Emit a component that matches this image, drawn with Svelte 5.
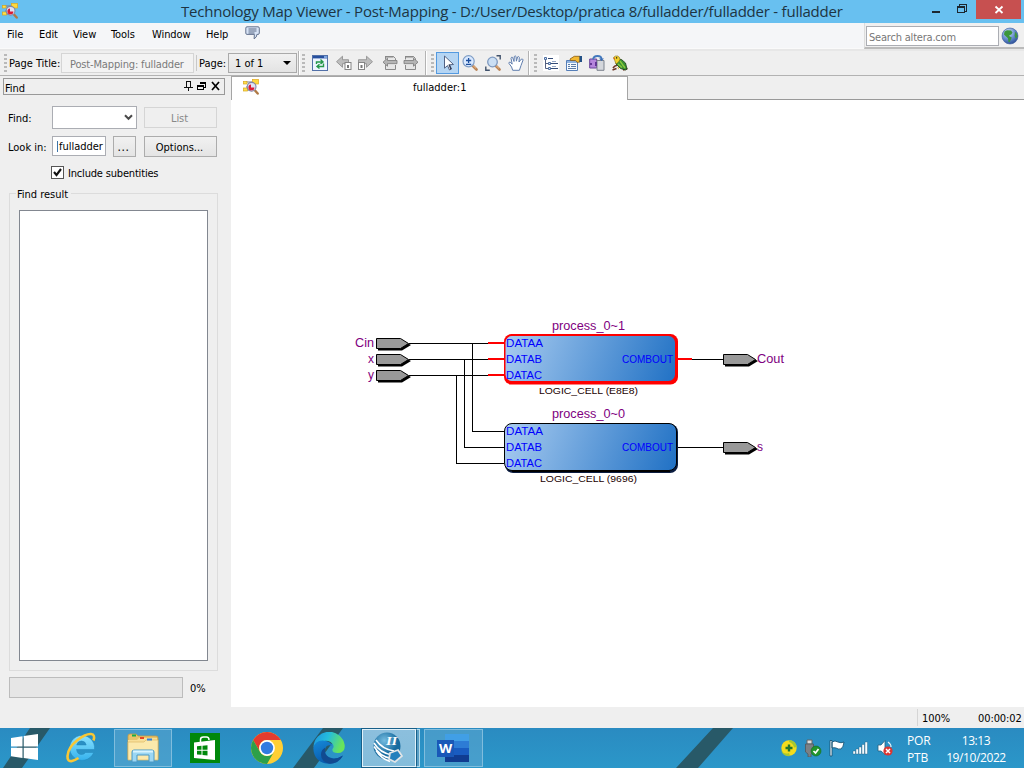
<script lang="ts">
  const menus = [
    { t: 'File', w: 32 }, { t: 'Edit', w: 34 }, { t: 'View', w: 38 },
    { t: 'Tools', w: 41 }, { t: 'Window', w: 54 }, { t: 'Help', w: 39 }
  ];
  const cells = [
    { y: 335, name: 'process_0~1', kind: 'LOGIC_CELL (E8E8)', sel: true },
    { y: 423, name: 'process_0~0', kind: 'LOGIC_CELL (9696)', sel: false }
  ];
  const ports = ['DATAA', 'DATAB', 'DATAC'];
  const pins = [
    { x: 376, y: 338, t: 'Cin', tx: 355, w: 19 },
    { x: 376, y: 354, t: 'x', tx: 368, w: 6 },
    { x: 376, y: 370, t: 'y', tx: 368, w: 6 },
    { x: 723, y: 354, t: 'Cout', tx: 757, w: 27 },
    { x: 723, y: 442, t: 's', tx: 757, w: 6 }
  ];
</script>

{#snippet mapIcon()}
  <svg class="i16" viewBox="0 0 16 16">
    <path d="M3 3h8M3 8h6M3 11h5" stroke="#777b96" fill="none" />
    <rect x="0.5" y="2.5" width="3.500" height="2.500" fill="#ffe04a" stroke="#d8a51e" stroke-width=".7" />
    <rect x="0.500" y="9" width="4" height="3" fill="#ffe04a" stroke="#d8a51e" stroke-width=".7" />
    <rect x="9.500" y="0.500" width="6" height="4.500" fill="#ffd93c" stroke="#e0a81c" stroke-width=".7" />
    <path d="M12 11.500l2.700 3" stroke="#b07a45" stroke-width="2.400" stroke-linecap="round" />
    <circle cx="8.600" cy="7.800" r="4.400" fill="#dfe2f4" stroke="#8287a6" stroke-width="1.100" />
    <path d="M8 5.400v3h3.400a3 3 0 1 1-3.400-3z" fill="#dc1a34" />
  </svg>
{/snippet}

{#snippet magnifier()}
  <path d="M10.500 10.500l4 4" stroke="#b98254" stroke-width="2.600" stroke-linecap="round" />
  <path d="M10.500 10l3.600 3.500" stroke="#eebd8b" stroke-width="1" />
{/snippet}

<div class="window">
  <header class="titlebar">
    <span class="app">{@render mapIcon()}</span>
    <h1>Technology Map Viewer - Post-Mapping - D:/User/Desktop/pratica 8/fulladder/fulladder - fulladder</h1>
    <svg class="winbtns" viewBox="0 0 44 20" shape-rendering="crispEdges">
      <path d="M4 11h8v2H4z" fill="#1c2730" />
      <path d="M31.500 6V4.500h7v7H37M29.500 6.500h7v6h-7z" fill="none" stroke="#1c2730" />
      <path d="M29 6h8v2h-8z" fill="#1c2730" />
    </svg>
    <div class="close"><svg viewBox="0 0 10 10"><path d="M1.500 1.500l7 6.500M8.500 1.500l-7 6.500" stroke="#fff" stroke-width="1.800" /></svg></div>
  </header>

  <nav class="menubar">
    {#each menus as m}<span style:width="{m.w}px">{m.t}</span>{/each}
    <svg class="chat" viewBox="0 0 15 14">
      <path d="M2 .8h11q1.300 0 1.300 1.300v5q0 1.300-1.300 1.300h-1.100q.2 2.700-2.800 4.500l.3-4.500H2Q.8 8.400.8 7.100v-5Q.8.8 2 .8z" fill="#d7e3f6" stroke="#64738e" />
      <path d="M3.500 3h8M3.500 5h8M3.500 7h6" stroke="#4e5d78" stroke-width=".9" />
    </svg>
    <div class="search">
      <div class="field">Search altera.com</div>
      <svg class="globe" viewBox="0 0 18 18">
        <defs><radialGradient id="glb" cx=".38" cy=".28" r=".8"><stop offset="0" stop-color="#d6e4f8" /><stop offset=".5" stop-color="#6b92d1" /><stop offset="1" stop-color="#23458f" /></radialGradient></defs>
        <circle cx="9" cy="9" r="8" fill="url(#glb)" stroke="#3a5c9d" stroke-width=".6" />
        <path d="M3.500 4.500L6 3.200l4 .3 1.500 2-1.200 2-2 .8.3 1.200 2.200 1-1 2.200-1.300 2.600-1-.4-.6-3.600L5 9.500 3 7.500z" fill="#3b973b" />
        <path d="M14 4.500l2 2.500.5 3-1.700 1.500-1.200-2.500z" fill="#419541" />
      </svg>
    </div>
  </nav>

  <div class="toolbar">
    <i class="grip"></i>
    <span class="ptitle">Page Title:</span>
    <span class="pagebox">Post-Mapping: fulladder</span>
    <i class="thin"></i>
    <span class="page">Page:</span>
    <span class="pagesel"><span>1 of 1</span><b></b></span>
    <i class="bar"></i>
    <i class="grip g2"></i>
    <div class="icons a">
      <svg class="i16" viewBox="0 0 16 16">
        <rect x=".5" y=".5" width="15" height="15" fill="#edf4ff" stroke="#5270a8" /><path d="M1 1h14v2.400H1z" fill="#264f9e" /><path d="M12 1h3v2h-3z" fill="#7da5e0" />
        <path d="M4.500 9V7h6M8.500 4.600l2.500 2.300-2.500 2.100M11.500 8.500v3h-6M7.500 9.300L5 11.500l2.500 2" fill="none" stroke="#26984a" stroke-width="1.400" />
      </svg>
      <svg class="i16" viewBox="0 0 16 16"><path d="M.5 6.700l6-5.500v3.500h6v4h-6v3.600z" fill="#bdbdbd" stroke="#8a8a8a" stroke-width=".8" /><rect x="9" y="7.500" width="6" height="7" fill="#fff" stroke="#858585" /><rect x="11" y="10" width="2" height="3" fill="#777" /></svg>
      <svg class="i16" viewBox="0 0 16 16"><path d="M15.500 6.700l-6-5.500v3.500h-8v4h8v3.600z" fill="#bdbdbd" stroke="#8a8a8a" stroke-width=".8" /><rect x="1.500" y="7.500" width="6" height="7" fill="#fff" stroke="#858585" /><rect x="3.500" y="10" width="2" height="3" fill="#777" /></svg>
      <svg class="i16" viewBox="0 0 16 16"><path d="M3.500 4.500v-3h8l2 2v1.500M3.500 10v4.500h10V10" fill="#e6e6e6" stroke="#8a8a8a" /><path d="M3 1h8.500v1.500H3z" fill="#888" /><path d="M1 7.200l4.500-4v2.300H15v3.200H5.500v2.500z" fill="#b5b5b5" stroke="#777" stroke-width=".8" /></svg>
      <svg class="i16" viewBox="0 0 16 16"><path d="M2.500 4.500v-3h8l2 2v1.500M2.500 10v4.500h10V10" fill="#e6e6e6" stroke="#8a8a8a" /><path d="M2 1h8.500v1.500H2z" fill="#888" /><path d="M15 7.200l-4.500-4v2.300H1v3.200h9.500v2.500z" fill="#b5b5b5" stroke="#777" stroke-width=".8" /></svg>
    </div>
    <i class="bar"></i>
    <i class="grip g3"></i>
    <div class="pressed"><svg class="i16" viewBox="0 0 16 16"><path d="M4.500 1v12.200l3-2.600 2 4.400 2-1-2-4.200 4-.3z" fill="#fff" stroke="#526284" /><path d="M9 9.500l2 4.800" stroke="#303a55" stroke-width="1.300" /></svg></div>
    <div class="icons b">
      <svg class="i16" viewBox="0 0 16 16">{@render magnifier()}<circle cx="6.600" cy="6.300" r="5.600" fill="#d9e9ff" stroke="#7f9dc5" stroke-width="1.200" /><path d="M4 5.500h5.200M6.600 3v5M4 9.300h5.200" stroke="#1b4e9e" stroke-width="1.300" /></svg>
      <svg class="i16" viewBox="0 0 16 16"><path d="M11.500.8h3.700v3.800M.8 11.400v3.800h4" fill="none" stroke="#40526c" stroke-width="1.400" />{@render magnifier()}<circle cx="7.500" cy="7" r="4.800" fill="#cbdff4" stroke="#7e99bf" stroke-width="1.300" /></svg>
      <svg class="i16" viewBox="0 0 16 16"><path d="M4.700 15.300L3.600 12 .8 8.200q0-1.300 1.400-1l2 1.900L3 3.300q.3-1.600 1.600-.9L6 6.500 6.300 1.500q.9-1.300 1.700 0l.4 4.700 1.200-4.300q1.200-.9 1.700.4L11 7l2.200-2.800q1.700-.6 1.900.7l-2.100 5.600-1.600 4.800z" fill="#fff" stroke="#5f7dad" /></svg>
    </div>
    <i class="bar"></i>
    <i class="grip g4"></i>
    <div class="icons c">
      <svg class="i16" viewBox="0 0 16 16"><path d="M0 0h16v16H0z" fill="#fff" /><path d="M2.500 4v9.500H6M2.500 8.500H6" fill="none" stroke="#536080" /><path d="M5 3.500h5M8 8.500h7M8 13.500h7" stroke="#344c77" stroke-width="1.200" /><path d="M9 6.500h4M9 11.500h4" stroke="#7c93b8" stroke-width=".8" /><path d="M1.500 2.500h2v2h-2zM5.500 7.500h2v2h-2zM5.500 12.500h2v2h-2z" fill="#dce8fa" stroke="#4e6fa1" /></svg>
      <svg class="i16" viewBox="0 0 16 16"><path d="M.5 5.500h11v10H.5z" fill="#f5faff" stroke="#557eb8" /><path d="M1 6h10v2H1z" fill="#8eb2df" /><path d="M2 9.500h2M5 9.500h5M2 11.500h2M5 11.500h5M2 13.500h8" stroke="#5b7ba7" /><path d="M4 4L8.300 1.300H14V7l-2.800.3L9.500 5.600 4.500 5.500z" fill="#f3b931" stroke="#865810" stroke-width=".8" /><path d="M13.500 1H16v6h-2.500z" fill="#245186" /></svg>
      <svg class="i16" viewBox="0 0 16 16"><path d="M.7 4h7v9h-7z" fill="#b585dc" stroke="#68449a" /><path d="M8 5.500h7v9.800H8z" fill="#d4d7dc" stroke="#7d838e" /><path d="M4 4.500Q4.500 1 8.500 1t4 3" fill="none" stroke="#4379bd" stroke-width="1.800" /><path d="M10 3.500h5L12.500 6z" fill="#386bb3" /><path d="M1 8h2v2H1zM6 7h2v4H6z" fill="#613693" /></svg>
      <svg class="i16" viewBox="0 0 16 16"><path d="M1 13q2-3 4-2.500M.5 15l4-1.500M11 15l4.500-1.500" fill="none" stroke="#6d3523" stroke-width="1.600" /><path d="M5 4l4.500.5 4 3.500 1.500 6-1.500 1-5-1.500L4 9z" fill="#3a9136" stroke="#1a3d13" stroke-width=".8" /><path d="M1.500 2.500Q3 .5 5.500 1q2.500.8 2.500 3.500L6.500 7 4 9 2.700 5.500z" fill="#f0d22a" stroke="#7d6a18" stroke-width=".6" /><path d="M1 3l2-.5v2.500z" fill="#d76c22" /><path d="M4 2.300h1.200v1.200H4z" fill="#111" /><path d="M8 6l5 7M6 9l4 3.500" stroke="#8aca3a" stroke-width="1.300" /><path d="M5 12l2 .5v2z" fill="#d9b02a" /></svg>
    </div>
  </div>

  <main>
    <aside>
      <div class="docktitle">
        <span>Find</span>
        <svg viewBox="0 0 38 12" shape-rendering="crispEdges">
          <path d="M2.500 1v6M6.500 1v6M2 1.500h5M0 7.500h9M4.500 8v3" fill="none" stroke="#111" /><path d="M6 1h1v6H6z" fill="#111" />
          <path d="M16.500 4V2.500h5v5H20M13.500 5.500h6v4h-6z" fill="none" stroke="#000" /><path d="M16 2h6v1.500h-6zM13 5h7v1.500h-7z" />
          <path d="M28 2l7 8M35 2l-7 8" stroke="#000" stroke-width="1.700" shape-rendering="auto" />
        </svg>
      </div>
      <div class="form">
        <span>Find:</span>
        <div class="combo"><svg viewBox="0 0 9 7"><path d="M1 1.200l3.500 3.600L8 1.200" fill="none" stroke="#4a4a4a" stroke-width="2" /></svg></div>
        <div class="btn off">List</div>
      </div>
      <div class="form row2">
        <span>Look in:</span>
        <div class="input"><i></i><span>fulladder</span></div>
        <div class="btn dots">...</div>
        <div class="btn opts">Options...</div>
      </div>
      <div class="check">
        <div><svg viewBox="0 0 11 11"><path d="M2 5l2.500 3L9 2" fill="none" stroke="#111" stroke-width="2.100" /></svg></div>
        <span>Include subentities</span>
      </div>
      <section class="group">
        <span class="legend">Find result</span>
        <div class="results"></div>
      </section>
      <div class="progress"><div></div><span>0%</span></div>
    </aside>

    <div class="doc">
      <div class="tabs">
        <div class="tab"><span class="ticon">{@render mapIcon()}</span><span class="tname">fulladder:1</span></div>
        <div class="rest"></div>
      </div>
      <svg class="canvas" viewBox="231 100 793 607">
        <defs>
          <linearGradient id="cell" gradientUnits="userSpaceOnUse" x1="0" y1="0" x2="165" y2="60"><stop offset="0" stop-color="#a9ccf0" /><stop offset="1" stop-color="#2272c5" /></linearGradient>
        </defs>
        <g fill="none" stroke="#000" shape-rendering="crispEdges">
          <path d="M409 343.500h80M409 359.500h80M409 375.500h80" />
          <path d="M472.500 343v88.500H504M464.500 359v88.500H504M456.500 375v88.500H504" />
          <path d="M691 359.500h32M678 447.500h45" />
        </g>
        <path d="M488 343h16M488 359h16M488 375h16M677 359h15" stroke="#f00" stroke-width="2" shape-rendering="crispEdges" />
        {#each cells as c}
          <text class="name" x="552" y={c.y - 5} textLength="73" lengthAdjust="spacingAndGlyphs">{c.name}</text>
          <g transform="translate(504 {c.y})">
            {#if c.sel}
              <rect x="0" y="-1" width="174" height="50.500" rx="7.500" fill="#f00" />
              <rect x="1.500" y="1" width="169.500" height="45" rx="6.500" fill="url(#cell)" />
            {:else}
              <rect x="1" y="1" width="173" height="49" rx="8" fill="#0a1c40" />
              <rect x=".5" y=".5" width="172" height="47" rx="7.500" fill="url(#cell)" stroke="#000" />
              <path d="M8 48.500h158" stroke="#000" />
            {/if}
          </g>
          {#each ports as p, i}
            <text class="port" x="506" y={c.y + 12 + i * 16} textLength={p === 'DATAA' ? 37 : 36} lengthAdjust="spacingAndGlyphs">{p}</text>
          {/each}
          <text class="port" x="622" y={c.y + 28} textLength="51" lengthAdjust="spacingAndGlyphs">COMBOUT</text>
          <text class="kind" x={c.sel ? 539 : 540} y={c.y + 59} textLength={c.sel ? 99 : 97} lengthAdjust="spacingAndGlyphs">{c.kind}</text>
        {/each}
        {#each pins as p}
          <g transform="translate({p.x} {p.y})">
            <path d="M2 2h24l9 5-9 5.500H2z" fill="#000" />
            <path d="M.5.5h24l8 5-8 5H.5z" fill="#999" stroke="#000" />
          </g>
          <text class="name" x={p.tx} y={p.y + 9} textLength={p.w} lengthAdjust="spacingAndGlyphs">{p.t}</text>
        {/each}
      </svg>
    </div>
  </main>

  <div class="status"><span class="zoom">100%</span><span>00:00:02</span></div>

  <footer>
    <svg class="stripes" viewBox="0 0 1024 40"><path d="M30 0h20L22 40H3zM323 0h20l-29 40h-21zM713 0h20l-35 40h-22z" fill="#285968" /></svg>
    <svg class="start" viewBox="0 0 28 26"><path d="M0 4l11.500-1.700v10.200H0zM12.700 2.100L27 0v12.500H12.700zM0 13.700h11.500v10.200L0 22.300zM12.700 13.700H27V26l-14.300-2z" fill="#fff" /></svg>
    <svg class="ie" viewBox="0 0 32 32">
      <defs><linearGradient id="ieg" x2="0" y2="1"><stop stop-color="#8ae2ff" /><stop offset="1" stop-color="#35b2ed" /></linearGradient></defs>
      <path d="M20.500 20.500h8.200a12.500 12.500 0 1 1 .8-6v3H11.500q.8 5 5 5 2.800 0 4-2zM11.700 13h9.500q-.8-4-4.600-4-4 0-4.900 4z" fill="url(#ieg)" stroke="#2387ba" stroke-width=".5" fill-rule="evenodd" />
      <path d="M28.500 8.500q2-6-2.500-6.500-5-.5-13.500 6Q3 15.500 2.500 24q-.3 6 4.500 5 3-.8 6.500-3" fill="none" stroke="#f8c735" stroke-width="2.600" />
    </svg>
    <div class="task explorer">
      <svg viewBox="0 0 32 30">
        <path d="M1 3q0-2 2-2h6l2 2h18q2 0 2 2v21H1z" fill="#e9c469" stroke="#c59b45" stroke-width=".8" />
        <path d="M5 1.500h4v2H5z" fill="#1aad47" /><path d="M1 7h9l2-2h18v21H1z" fill="#f7df98" /><path d="M13 4h4v2h-4z" fill="#e84524" /><path d="M1 9h16l2-2h12v20H1z" fill="#fbe9ac" stroke="#dcb966" stroke-width=".7" /><path d="M20 5.500h5v2h-5z" fill="#3481de" />
        <path d="M5 29V19q0-2 2-2h18q2 0 2 2v10h-5v-7H10v7z" fill="#9bd7f4" stroke="#4b98c5" /><path d="M6 18.500h20" stroke="#d8f4ff" stroke-width="2" />
      </svg>
    </div>
    <svg class="store" viewBox="0 0 30 30"><path d="M0 0h30v30H0z" fill="#00880b" /><path d="M10.500 9V6.500q0-2.500 3-2.500h3q2.500 0 2.500 3" fill="none" stroke="#fff" stroke-width="1.500" /><path d="M4 9.500L25 7v20L4 25z" fill="#fff" /><path d="M7 13.300l4.500-.5v4H7zM12.500 12.700l5-.5v4.600h-5zM7 17.800h4.500v4L7 21.400zM12.500 17.800h5v4.600l-5-.5z" fill="#00880b" /></svg>
    <svg class="chrome" viewBox="0 0 32 32"><circle cx="16" cy="16" r="16" fill="#ffcf35" /><path d="M2.150 8A16 16 0 0 1 29.850 8H16a8 8 0 0 0-6.930 12z" fill="#e33b2e" /><path d="M2.150 8A16 16 0 0 0 16 32l6.930-12a8 8 0 0 1-13.860 0z" fill="#2da04a" /><circle cx="16" cy="16" r="7.900" fill="#fff" /><circle cx="16" cy="16" r="6.200" fill="#327ce0" /></svg>
    <svg class="edge" viewBox="0 0 32 32">
      <defs><linearGradient id="eg" x2="1" y2=".3"><stop stop-color="#1c91df" /><stop offset=".5" stop-color="#25bddb" /><stop offset="1" stop-color="#68e45c" /></linearGradient><linearGradient id="eb" x2=".5" y2="1"><stop stop-color="#1689d8" /><stop offset="1" stop-color="#0757a9" /></linearGradient></defs>
      <path d="M.5 15A15.700 15.700 0 0 1 31.700 13q.8 8-7.200 8-6 0-5-4 3-4-2-7-7-4-17 5z" fill="url(#eg)" />
      <path d="M.3 16Q2 8.500 9.500 8.500q8 .5 9.500 5-6-1.500-7 4-.5 8 9 9 4 0 9-3-4 8.300-14 8.300Q1 31 .3 16z" fill="url(#eb)" />
      <path d="M12 17.500q-1 7 7 9 5 1 11-3-5 8-13 8.200-9-2-9-9 0-5 4-7z" fill="#114b91" />
    </svg>
    <div class="task active">
      <svg viewBox="0 0 30 32">
        <defs><radialGradient id="qg" cx=".4" cy=".3"><stop stop-color="#75bce0" /><stop offset="1" stop-color="#176b9f" /></radialGradient></defs>
        <circle cx="14" cy="14" r="13.500" fill="url(#qg)" />
        <path d="M1 11q6 10 18 12M1 14.500q6 10 17 12M3 18.500q5 8 14 11M3 8q6 9 18 11" fill="none" stroke="#fff" stroke-width="1.500" />
        <path d="M17 21l8-3 4 6-7 6-6-3z" fill="#2380bd" stroke="#e2e5e7" stroke-width="1.800" />
        <text x="13" y="12.500" class="two" textLength="11" lengthAdjust="spacingAndGlyphs">II</text>
      </svg>
    </div>
    <div class="stack"></div>
    <div class="task word">
      <svg viewBox="0 0 32 28"><path d="M8 0h24v7H8z" fill="#419fe6" /><path d="M8 7h24v7H8z" fill="#2d7cd5" /><path d="M8 14h24v7H8z" fill="#195cc1" /><path d="M8 21h24v7H8z" fill="#103c91" /><path d="M0 6h17v17H0z" fill="#1958b8" /><text x="2" y="19" class="w" textLength="13" lengthAdjust="spacingAndGlyphs">W</text></svg>
    </div>
    <div class="tray">
      <svg viewBox="0 0 18 18"><circle cx="9" cy="9" r="7.700" fill="#f4dc1c" /><path d="M9 1a8 8 0 0 1 8 7l-3 .5Q13 4 9 3zM1 11q3 5 8 3l1 3Q3 18 1 11z" fill="#a7c831" /><path d="M9 5.500v7M5.500 9h7" stroke="#237529" stroke-width="2.400" /></svg>
      <svg viewBox="0 0 18 18"><path d="M3 1h5v4H3z" fill="#ddd" stroke="#666" /><path d="M1.500 5h8v8L7 15.500V18H4v-3l-2.500-2z" fill="#7b8085" stroke="#50565a" stroke-width=".8" /><circle cx="12" cy="12" r="5" fill="#20952c" stroke="#156a20" stroke-width=".6" /><path d="M9.500 12l2 2 3-4" fill="none" stroke="#fff" stroke-width="1.700" /></svg>
      <svg viewBox="0 0 18 18"><path d="M2 1.500h2V17H2zM4 3q3-2 6 0 3 1.500 6 0-.5 5-3 7-3 .5-5-1-2-.6-4 0z" fill="#fff" stroke="#175577" stroke-width=".9" /></svg>
      <svg viewBox="0 0 18 18"><path d="M1 12h2.500v3H1zM4 10h2.500v5H4zM7 8h2.500v7H7zM10 5.500h2.500V15H10zM13 3h2.500v12H13z" fill="#f4fbff" stroke="#245a78" stroke-width=".4" /></svg>
      <svg viewBox="0 0 18 18"><path d="M2 6h3l4-4.500v14L5 12H2z" fill="#fff" stroke="#27617f" stroke-width=".8" /><path d="M12 3q3 2 3 5" fill="none" stroke="#e5f2f8" stroke-width="1.300" /><circle cx="12" cy="12" r="4.600" fill="#db3631" /><path d="M10 10l4 4M14 10l-4 4" stroke="#fff" stroke-width="1.500" /></svg>
    </div>
    <div class="lang"><span>POR</span><span>PTB</span></div>
    <div class="clock"><span>13:13</span><span>19/10/2022</span></div>
  </footer>
</div>

<style>
  :global(body) { margin: 0; overflow: hidden; }
  * { box-sizing: border-box; }
  svg { display: block; flex: none; }
  .window { width: 1024px; height: 768px; display: flex; flex-direction: column; background: #efefef; color: #000; font: 11px/14px "DejaVu Sans Condensed", "DejaVu Sans", sans-serif; font-stretch: condensed; letter-spacing: -0.03px; white-space: nowrap; }
  .i16 { width: 16px; height: 16px; }

  .titlebar { height: 23px; flex: none; display: flex; background: #68c0f0; }
  .app { width: 18px; padding: 3px 0 0 2px; }
  h1 { margin: 0; width: 910px; padding-left: 163px; font: 400 15px/23px "Open Sans", sans-serif; letter-spacing: -.225px; color: #1d3442; }
  .winbtns { width: 44px; height: 20px; }
  .close { width: 45px; height: 19px; margin-left: 4px; background: #c75050; display: flex; align-items: center; justify-content: center; }
  .close svg { width: 10px; height: 10px; }

  .menubar { height: 28px; flex: none; display: flex; padding-left: 7px; background: #f5f6f8; border-bottom: 2px solid #e7e7e7; box-shadow: inset 0 -1px #fafafa; line-height: 23px; letter-spacing: -.08px; }
  .chat { width: 15px; height: 14px; margin-top: 3px; }
  .search { margin-left: auto; width: 160px; height: 26px; padding: 3px 0 0 1px; display: flex; background: #f0f0f0; border-bottom: 2px solid #bbb; border-left: 1px solid #ddd; }
  .field { width: 133px; height: 20px; padding-left: 2px; border: 1px solid #abadb3; background: #fff; color: #777; line-height: 21px; letter-spacing: -.2px; }
  .globe { width: 18px; height: 18px; margin: 1px 0 0 2px; }

  .toolbar { height: 25px; flex: none; display: flex; align-items: center; border-bottom: 1px solid #b2b2b2; padding-left: 4px; }
  .toolbar > * { flex: none; }
  .grip { width: 3px; height: 18px; background: repeating-linear-gradient(#b9b9b9 0 2px, transparent 2px 4px); }
  .ptitle { width: 52px; margin-left: 2px; padding-top: 1px; }
  .pagebox { width: 133px; height: 20px; border: 1px solid #d5d5d5; background: #f3f3f3; color: #7a7a7a; line-height: 21px; padding-left: 8px; letter-spacing: -.15px; }
  .thin { width: 1px; height: 16px; background: #c8c8c8; margin: 0 2px; }
  .page { width: 29px; padding-top: 1px; }
  .pagesel { width: 69px; height: 20px; border: 1px solid #aaa; background: linear-gradient(#f1f1f1, #e3e3e3); display: flex; align-items: center; justify-content: space-between; padding: 0 5px 0 6px; }
  .pagesel span { padding-top: 1px; }
  .pagesel b { border: 4px solid transparent; border-top-color: #000; border-bottom: 0; }
  .bar { width: 2px; height: 24px; margin-left: 1px; background: linear-gradient(90deg, #b3b3b3 50%, #fff 50%); }
  .g2 { margin-left: 2px; }
  .icons { display: flex; }
  .a { margin-left: 7px; gap: 5px; }
  .a svg:nth-child(2) { margin-left: 3px; }
  .a svg:nth-child(4) { margin-left: 4px; }
  .a + .bar { margin-left: 6px; }
  .g3 { margin-left: 4px; }
  .pressed { width: 23px; height: 22px; margin-left: 2px; display: flex; align-items: center; justify-content: center; background: #b5d5f3; border: 1px solid #549ae0; }
  .b { margin-left: 3px; gap: 7px; }
  .b + .bar { margin-left: 4px; }
  .g4 { margin-left: 4px; }
  .c { margin-left: 6px; gap: 7px; }

  main { flex: 1; min-height: 0; display: flex; }
  aside { width: 231px; flex: none; padding: 2px 0 0 3px; display: flex; flex-direction: column; }
  .docktitle { width: 222px; height: 17px; flex: none; display: flex; justify-content: space-between; border: 1px solid #999; padding: 0 2px 0 1px; line-height: 19px; }
  .docktitle svg { width: 38px; height: 12px; margin-top: 1px; }
  .form { display: flex; align-items: center; margin: 11px 0 0 5px; height: 23px; }
  .form > span { width: 44px; padding-top: 2px; letter-spacing: 0; }
  .combo { width: 85px; height: 23px; border: 1px solid #abadb3; background: #fff; display: flex; align-items: center; justify-content: flex-end; padding-right: 3px; }
  .combo svg { width: 9px; height: 7px; }
  .btn { width: 73px; height: 21px; margin-left: 7px; padding-right: 2px; border: 1px solid #acacac; background: linear-gradient(#f1f1f1, #e4e4e4); text-align: center; line-height: 21px; }
  .off { color: #888; border-color: #d5d5d5; background: #efefef; }
  .row2 { height: 21px; margin-top: 7px; }
  .input { width: 54px; height: 20px; margin-bottom: 1px; padding-left: 4px; background: #fff; border: 1px solid #abadb3; display: flex; align-items: center; }
  .input span { padding-top: 2px; }
  .input i { width: 1px; height: 11px; background: #3d75a8; margin-right: 1px; }
  .dots { width: 23px; font-size: 12px; letter-spacing: .5px; }
  .opts { margin-left: 8px; }
  .check { height: 13px; margin: 9px 0 0 48px; display: flex; align-items: center; letter-spacing: -.18px; }
  .check div { width: 13px; height: 13px; border: 1px solid #555; background: #fff; margin-right: 4px; }
  .check span { padding-top: 2px; }
  .check svg { width: 11px; height: 11px; }
  .group { width: 209px; height: 478px; margin: 14px 0 0 6px; border: 1px solid #dcdcdc; }
  .legend { display: block; width: 55px; height: 14px; margin: -7px 0 0 6px; padding-left: 1px; background: #efefef; line-height: 16px; }
  .results { width: 189px; height: 451px; margin: 9px 0 0 9px; background: #fff; border: 1px solid #828790; }
  .progress { display: flex; align-items: center; margin: 6px 0 0 6px; }
  .progress div { width: 174px; height: 21px; border: 1px solid #bcbcbc; background: #e6e6e6; }
  .progress span { margin-left: 7px; padding-top: 2px; }

  .doc { flex: 1; display: flex; flex-direction: column; }
  .tabs { display: flex; height: 24px; flex: none; }
  .tab { width: 397px; display: flex; background: #fff; border: solid #a5a5a5; border-width: 1px 1px 0; }
  .ticon { width: 181px; padding: 2px 0 0 11px; }
  .tname { line-height: 22px; letter-spacing: 0; }
  .rest { flex: 1; border-bottom: 1px solid #999; }
  .canvas { width: 793px; height: 607px; background: #fff; }
  .canvas text { letter-spacing: 0; }
  .name { font: 12px "Liberation Sans", sans-serif; fill: #800080; }
  .port { font: 11px "Liberation Sans", sans-serif; fill: #00f; }
  .kind { font: 9.5px "Liberation Sans", sans-serif; fill: #200; }

  .status { height: 21px; flex: none; display: flex; justify-content: flex-end; align-items: center; }
  .status .zoom { width: 61px; height: 17px; line-height: 19px; padding-left: 4px; border-left: 1px solid #d5d5d5; }
  .status span:last-child { width: 46px; padding-top: 2px; letter-spacing: -.1px; }

  footer { height: 40px; flex: none; position: relative; isolation: isolate; display: flex; align-items: center; background: linear-gradient(#2a8bc1, #2b97c9); color: #fff; font: 12px/17px "Open Sans", sans-serif; letter-spacing: -.2px; }
  .stripes { position: absolute; inset: 0; z-index: -1; width: 1024px; height: 40px; }
  .start { width: 28px; height: 26px; margin: 0 0 2px 11px; }
  .ie { width: 32px; height: 32px; margin-left: 26px; }
  .task { height: 38px; border: 1px solid #80bddd; background: #5aa5cf99; display: flex; align-items: center; justify-content: center; }
  .explorer { width: 58px; margin-left: 17px; }
  .explorer svg { width: 32px; height: 30px; }
  .store { width: 30px; height: 30px; margin-left: 18px; }
  .chrome { width: 32px; height: 32px; margin-left: 31px; }
  .edge { width: 32px; height: 32px; margin-left: 30px; }
  .active { width: 54px; margin-left: 17px; border-color: #e1f1f9; background: linear-gradient(#8cbfdd, #84bddb); box-shadow: 0 0 0 1px #175f89; }
  .active svg { width: 30px; height: 32px; margin-right: 3px; }
  .two { font: italic bold 13px "Liberation Serif", serif; fill: #fff; }
  .stack { width: 4px; height: 38px; border: 1px solid #b8dceb; border-left-color: #175f89; background: #599fc5; }
  .word { width: 59px; margin-left: 4px; }
  .word svg { width: 32px; height: 28px; margin-right: 2px; }
  .w { font: bold 13px "Open Sans", sans-serif; fill: #fff; }
  .tray { display: flex; gap: 6px; margin-left: 297px; }
  .tray svg { width: 18px; height: 18px; }
  .lang, .clock { display: flex; flex-direction: column; padding-top: 2px; }
  .lang { width: 26px; margin-left: 13px; }
  .clock { width: 62px; margin-left: 12px; align-items: center; letter-spacing: -.4px; }
</style>
